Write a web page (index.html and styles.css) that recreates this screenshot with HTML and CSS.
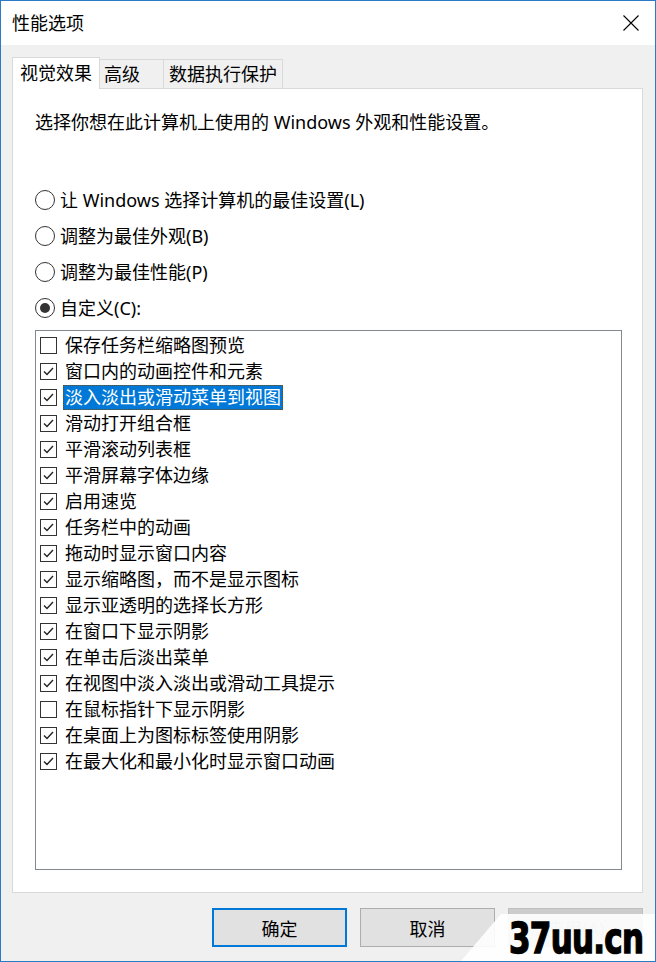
FILE: index.html
```html
<!DOCTYPE html>
<html lang="zh-CN">

<head>
    <meta charset="UTF-8">
    <meta name="viewport" content="width=device-width, initial-scale=1.0">
    <title>性能选项</title>
    <link rel="stylesheet" href="styles.css">
</head>

<body>
    <div class="window">
        <!-- Title bar -->
        <div class="titlebar">
            <span class="title">性能选项</span>
            <svg class="close" width="16" height="16" viewBox="0 0 16 16">
                <path d="M0.5 0.5 L15.5 15.5 M15.5 0.5 L0.5 15.5" stroke="#000" stroke-width="1.1" fill="none"/>
            </svg>
        </div>

        <div class="client">
            <!-- Tabs -->
            <div class="tabs">
                <div class="tab active">视觉效果</div>
                <div class="tab tab-advanced">高级</div>
                <div class="tab tab-dep">数据执行保护</div>
            </div>

            <div class="panel">
                <p class="intro">选择你想在此计算机上使用的 Windows 外观和性能设置。</p>

                <div class="options">
                    <div class="radio"><span class="circle"></span>让 Windows 选择计算机的最佳设置(L)</div>
                    <div class="radio"><span class="circle"></span>调整为最佳外观(B)</div>
                    <div class="radio"><span class="circle"></span>调整为最佳性能(P)</div>
                    <div class="radio checked"><span class="circle"></span>自定义(C):</div>
                </div>

                <ul class="effects">
                    <li><span class="box"></span><span class="label">保存任务栏缩略图预览</span></li>
                    <li><span class="box"><svg viewBox="0 0 15 15"><path d="M3 7.5 L6 10.5 L12 4"/></svg></span><span class="label">窗口内的动画控件和元素</span></li>
                    <li class="selected"><span class="box"><svg viewBox="0 0 15 15"><path d="M3 7.5 L6 10.5 L12 4"/></svg></span><span class="label">淡入淡出或滑动菜单到视图</span></li>
                    <li><span class="box"><svg viewBox="0 0 15 15"><path d="M3 7.5 L6 10.5 L12 4"/></svg></span><span class="label">滑动打开组合框</span></li>
                    <li><span class="box"><svg viewBox="0 0 15 15"><path d="M3 7.5 L6 10.5 L12 4"/></svg></span><span class="label">平滑滚动列表框</span></li>
                    <li><span class="box"><svg viewBox="0 0 15 15"><path d="M3 7.5 L6 10.5 L12 4"/></svg></span><span class="label">平滑屏幕字体边缘</span></li>
                    <li><span class="box"><svg viewBox="0 0 15 15"><path d="M3 7.5 L6 10.5 L12 4"/></svg></span><span class="label">启用速览</span></li>
                    <li><span class="box"><svg viewBox="0 0 15 15"><path d="M3 7.5 L6 10.5 L12 4"/></svg></span><span class="label">任务栏中的动画</span></li>
                    <li><span class="box"><svg viewBox="0 0 15 15"><path d="M3 7.5 L6 10.5 L12 4"/></svg></span><span class="label">拖动时显示窗口内容</span></li>
                    <li><span class="box"><svg viewBox="0 0 15 15"><path d="M3 7.5 L6 10.5 L12 4"/></svg></span><span class="label">显示缩略图，而不是显示图标</span></li>
                    <li><span class="box"><svg viewBox="0 0 15 15"><path d="M3 7.5 L6 10.5 L12 4"/></svg></span><span class="label">显示亚透明的选择长方形</span></li>
                    <li><span class="box"><svg viewBox="0 0 15 15"><path d="M3 7.5 L6 10.5 L12 4"/></svg></span><span class="label">在窗口下显示阴影</span></li>
                    <li><span class="box"><svg viewBox="0 0 15 15"><path d="M3 7.5 L6 10.5 L12 4"/></svg></span><span class="label">在单击后淡出菜单</span></li>
                    <li><span class="box"><svg viewBox="0 0 15 15"><path d="M3 7.5 L6 10.5 L12 4"/></svg></span><span class="label">在视图中淡入淡出或滑动工具提示</span></li>
                    <li><span class="box"></span><span class="label">在鼠标指针下显示阴影</span></li>
                    <li><span class="box"><svg viewBox="0 0 15 15"><path d="M3 7.5 L6 10.5 L12 4"/></svg></span><span class="label">在桌面上为图标标签使用阴影</span></li>
                    <li><span class="box"><svg viewBox="0 0 15 15"><path d="M3 7.5 L6 10.5 L12 4"/></svg></span><span class="label">在最大化和最小化时显示窗口动画</span></li>
                </ul>
            </div>

            <!-- Dialog buttons -->
            <div class="buttons">
                <button class="btn default">确定</button>
                <button class="btn">取消</button>
                <button class="btn" disabled>应用(A)</button>
            </div>
        </div>

        <!-- Site watermark -->
        <div class="watermark"><span class="mark">37uu.cn</span></div>
    </div>
</body>

</html>
```

FILE: styles.css
```css
body {
    margin: 0;
    padding: 0;
    font-family: "Noto Sans", "Noto Sans CJK SC", sans-serif;
    font-size: 18px;
    color: #000;
}

.window {
    position: relative;
    width: 656px;
    height: 962px;
    box-sizing: border-box;
    border: 1px solid #2b7ac7;
    background: #f0f0f0;
    display: flex;
    flex-direction: column;
    overflow: hidden;
}

.titlebar {
    height: 44px;
    background: #fff;
    display: flex;
    align-items: center;
    justify-content: space-between;
    padding: 0 16px 0 11px;
}

.title {
    line-height: 24px;
}

.close {
    display: block;
}

.client {
    flex: 1;
    padding: 12px 12px 0 11px;
    display: flex;
    flex-direction: column;
}

/* tabs */
.tabs {
    display: flex;
    align-items: flex-end;
}

.tab {
    box-sizing: border-box;
    height: 29px;
    border: 1px solid #d9d9d9;
    border-bottom: none;
    border-left: none;
    background: #f0f0f0;
    display: flex;
    align-items: center;
    padding-left: 4px;
    line-height: 24px;
}

.tab.active {
    position: relative;
    z-index: 1;
    width: 88px;
    height: 32px;
    margin-bottom: -1px;
    border-left: 1px solid #d9d9d9;
    background: #fff;
    padding-left: 7px;
    padding-bottom: 1px;
}

.tab-advanced {
    width: 64px;
}

.tab-dep {
    width: 119px;
    padding-left: 5px;
}

/* panel */
.panel {
    height: 805px;
    box-sizing: border-box;
    border: 1px solid #d9d9d9;
    background: #fff;
    padding: 21px 20px 0 22px;
}

.intro {
    margin: 0 0 48px;
    line-height: 24px;
}

.options {
    margin-bottom: 4px;
}

.radio {
    height: 36px;
    display: flex;
    align-items: center;
    line-height: 24px;
}

.circle {
    width: 20px;
    height: 20px;
    box-sizing: border-box;
    border: 1px solid #333;
    border-radius: 50%;
    background: #fff;
    margin-right: 5px;
    display: flex;
    align-items: center;
    justify-content: center;
}

.radio.checked .circle::after {
    content: "";
    width: 10px;
    height: 10px;
    border-radius: 50%;
    background: #333;
}

/* list of effects */
.effects {
    list-style: none;
    margin: 0;
    padding: 1px 0 0;
    height: 540px;
    box-sizing: border-box;
    border: 1px solid #828790;
    background: #fff;
}

.effects li {
    height: 26px;
    display: flex;
    align-items: center;
}

.box {
    width: 17px;
    height: 17px;
    box-sizing: border-box;
    border: 1px solid #333;
    background: #fff;
    margin-left: 4px;
    display: block;
}

.box svg {
    display: block;
    width: 15px;
    height: 15px;
    fill: none;
    stroke: #222;
    stroke-width: 1.4;
}

.label {
    margin-left: 6px;
    padding: 0 1px;
    border: 1px dotted transparent;
    line-height: 23px;
    height: 23px;
}

.effects li.selected .label {
    background: #0078d7;
    color: #fff;
    border-color: #7a4a00;
}

/* buttons */
.buttons {
    display: flex;
    justify-content: flex-end;
    gap: 13px;
    margin-top: 15px;
}

.btn {
    width: 135px;
    height: 39px;
    box-sizing: border-box;
    border: 1px solid #adadad;
    background: #e1e1e1;
    font-family: inherit;
    font-size: 18px;
    color: #000;
    padding: 0;
}

.btn.default {
    border: 2px solid #0078d7;
}

.btn:disabled {
    color: #a0a0a0;
    border-color: #bfbfbf;
    background: #cccccc;
}

/* watermark in the corner */
.watermark {
    position: absolute;
    left: 460px;
    top: 913px;
    right: 0;
    bottom: 0;
    background: rgba(255, 255, 255, 0.9);
    clip-path: polygon(40px 0, 100% 0, 100% 100%, 0 100%);
}

.mark {
    position: absolute;
    left: 48px;
    top: 0;
    font-family: "DejaVu Sans", sans-serif;
    font-weight: 700;
    font-size: 43px;
    line-height: 49px;
    letter-spacing: -1px;
    color: #000;
    -webkit-text-stroke: 1.5px #000;
    transform: scaleX(0.72);
    transform-origin: left top;
}
```
